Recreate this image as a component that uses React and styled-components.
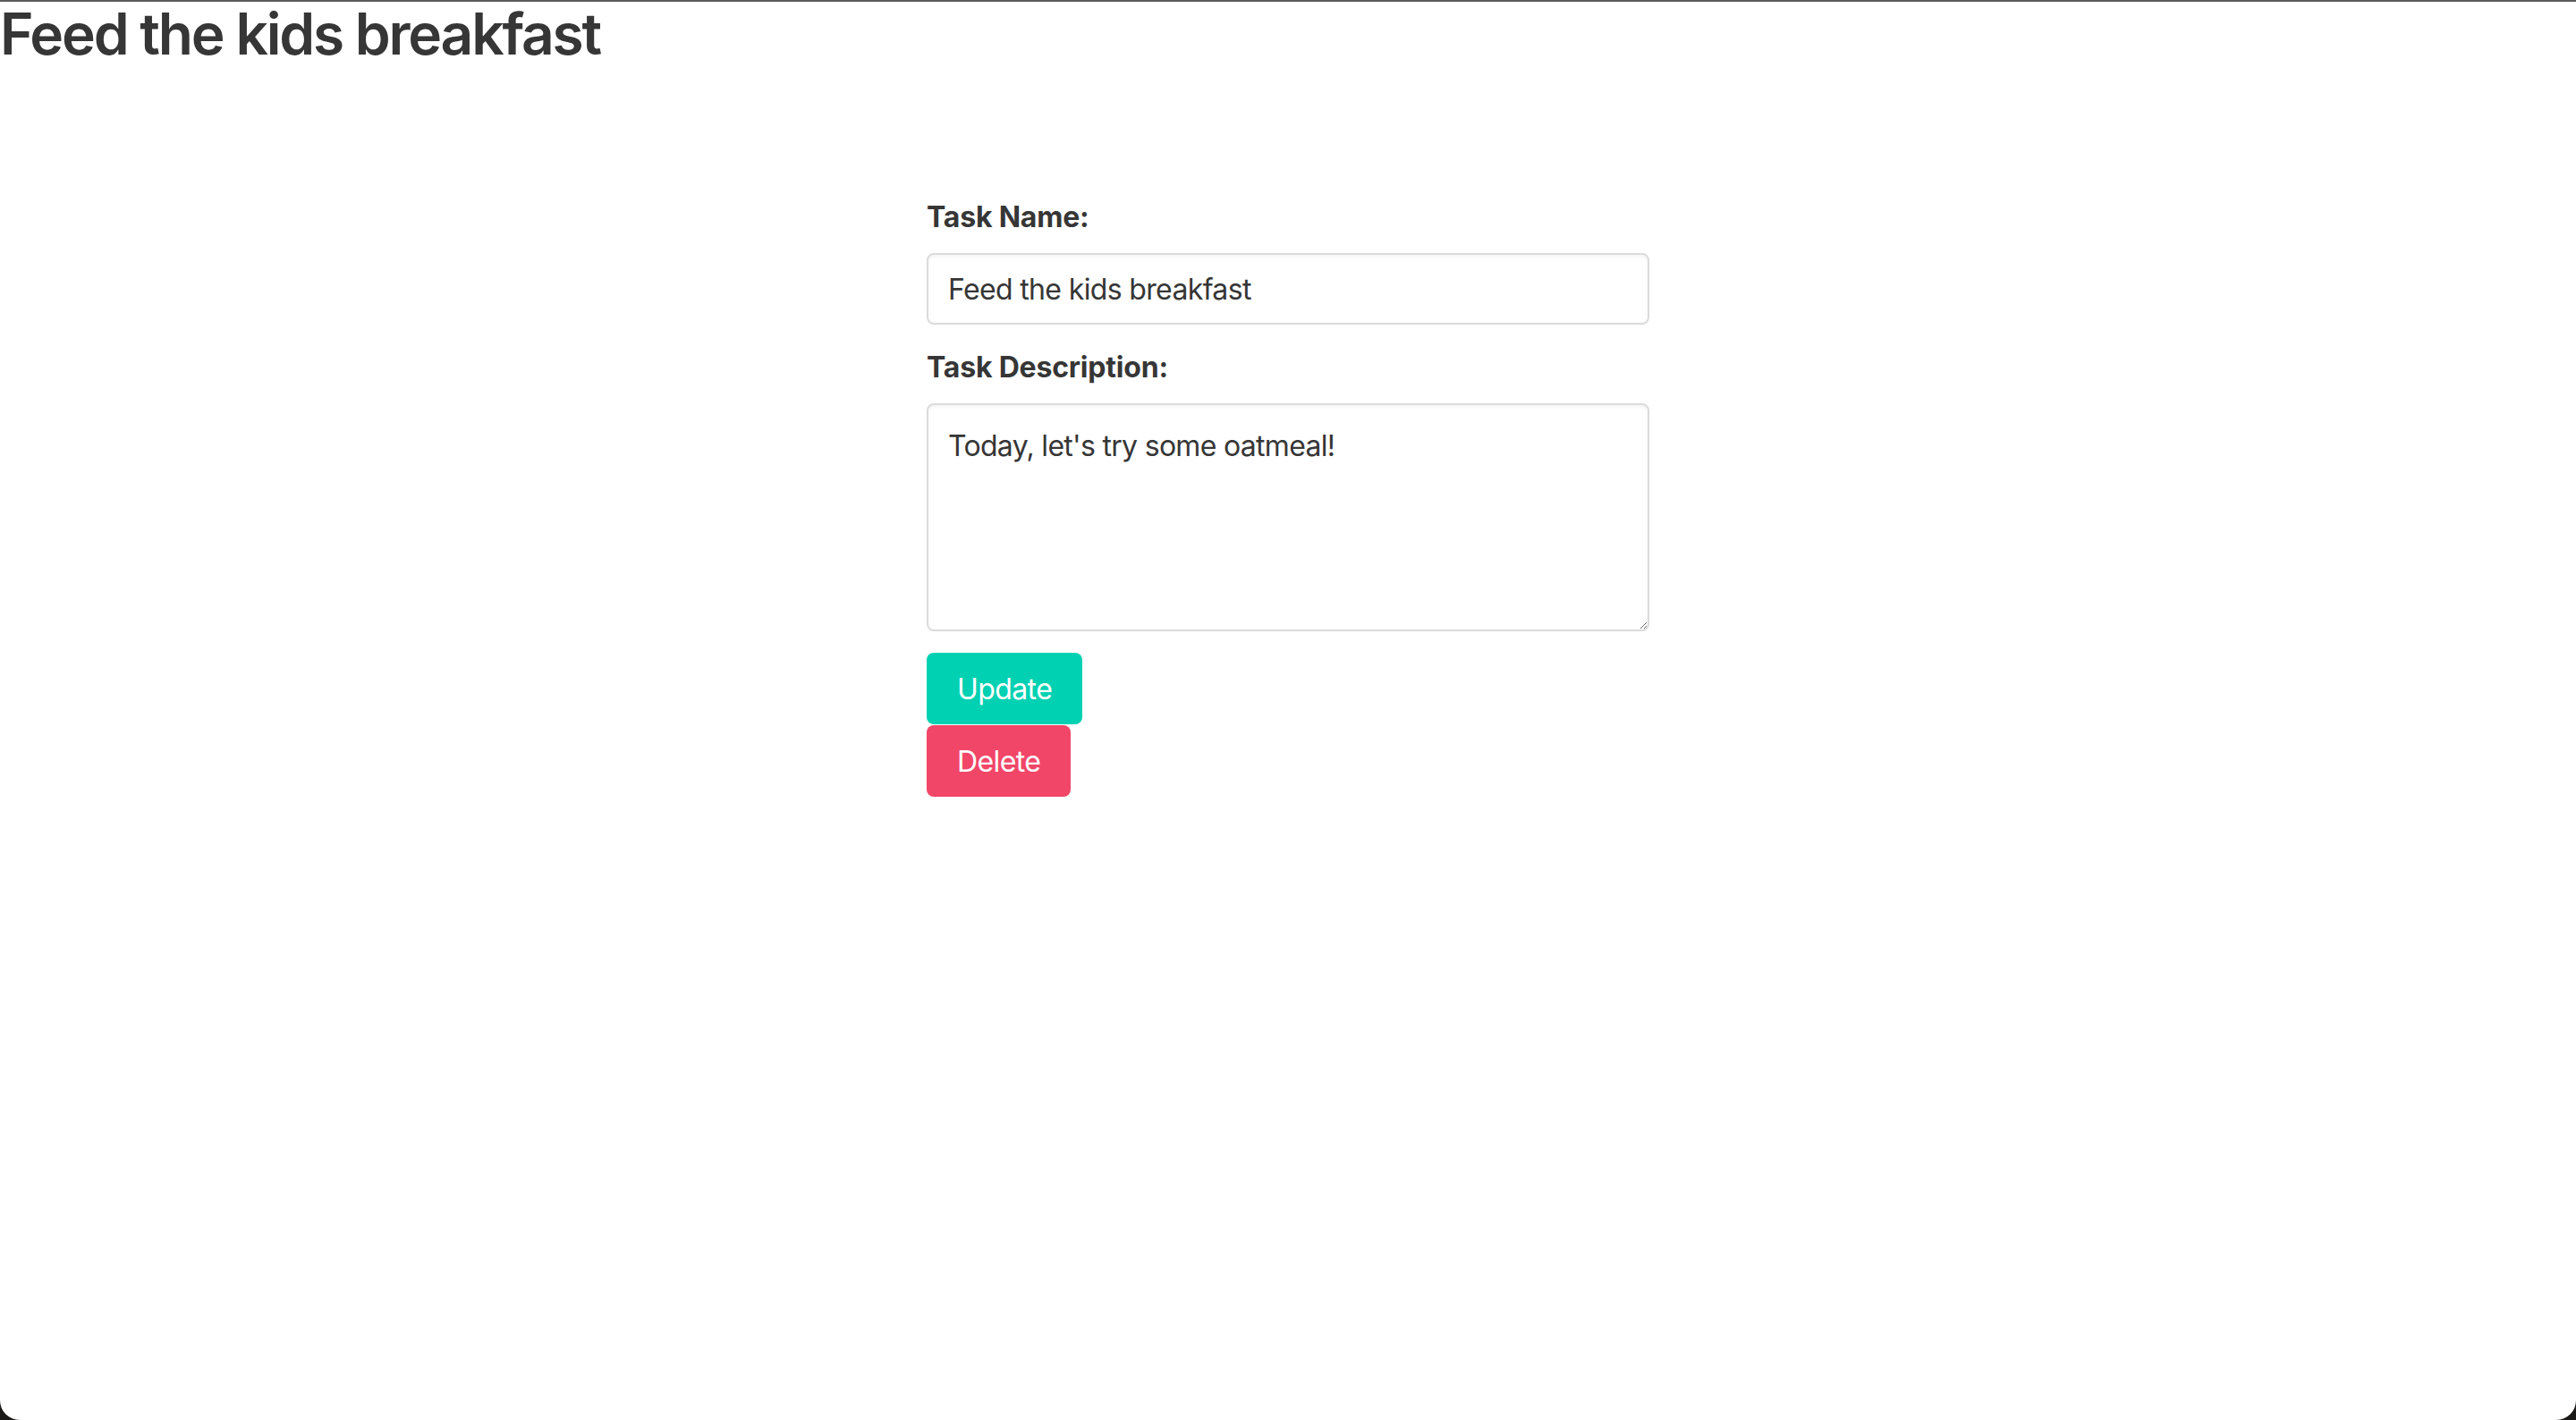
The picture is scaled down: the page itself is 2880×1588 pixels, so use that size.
import React from "react";
import styled, { createGlobalStyle } from "styled-components";

const GlobalStyle = createGlobalStyle`
  html, body {
    margin: 0;
    padding: 0;
    background-color: #1c1a19;
  }
  * {
    box-sizing: border-box;
  }
`;

const Page = styled.div`
  min-height: 100vh;
  background-color: white;
  border-top: 2px solid #5c5c5c;
  border-radius: 0 0 22px 22px;
  font-family: Inter, "Noto Sans", sans-serif;
  color: #363636;
`;

const Title = styled.h1`
  margin: 0;
  font-size: 64px;
  font-weight: 600;
  line-height: 72px;
  color: #363636;
  letter-spacing: -2.2px;
`;

const Form = styled.form`
  width: 808px;
  margin: 145px auto 0;
  display: flex;
  flex-direction: column;
`;

const Field = styled.div`
  display: flex;
  flex-direction: column;
  margin-bottom: 24px;
`;

const Label = styled.label`
  font-size: 32px;
  font-weight: 700;
  line-height: 48px;
  margin-bottom: 16px;
  color: #363636;
  letter-spacing: -0.2px;
`;

const Input = styled.input`
  height: 80px;
  width: 100%;
  padding: 0 22px;
  font-family: inherit;
  font-size: 32px;
  letter-spacing: -0.65px;
  color: #363636;
  border: 2px solid #dbdbdb;
  border-radius: 8px;
  box-shadow: inset 0 2px 4px rgba(10, 10, 10, 0.05);
  outline: none;
`;

const TextArea = styled.textarea`
  height: 255px;
  width: 100%;
  padding: 22px 22px;
  font-family: inherit;
  font-size: 32px;
  line-height: 48px;
  letter-spacing: -0.7px;
  color: #363636;
  border: 2px solid #dbdbdb;
  border-radius: 8px;
  box-shadow: inset 0 2px 4px rgba(10, 10, 10, 0.05);
  outline: none;
  resize: vertical;
`;

const Actions = styled.div`
  display: flex;
  flex-direction: column;
  align-items: flex-start;
  gap: 1px;
`;

const Button = styled.button`
  height: 80px;
  padding: 0 32px;
  border: 2px solid transparent;
  border-radius: 8px;
  font-family: inherit;
  font-size: 32px;
  letter-spacing: -0.6px;
  color: white;
  cursor: pointer;
  background-color: ${({ $variant }) =>
    $variant === "danger" ? "#f14668" : "#00d1b2"};
`;

const App = () => {
  return (
    <>
      <GlobalStyle />
      <Page>
        <Title>Feed the kids breakfast</Title>
        <Form onSubmit={(e) => e.preventDefault()}>
          <Field>
            <Label>Task Name:</Label>
            <Input type="text" defaultValue="Feed the kids breakfast" />
          </Field>
          <Field>
            <Label>Task Description:</Label>
            <TextArea defaultValue="Today, let's try some oatmeal!" />
          </Field>
          <Actions>
            <Button type="button">Update</Button>
            <Button type="button" $variant="danger">
              Delete
            </Button>
          </Actions>
        </Form>
      </Page>
    </>
  );
};

export default App;
